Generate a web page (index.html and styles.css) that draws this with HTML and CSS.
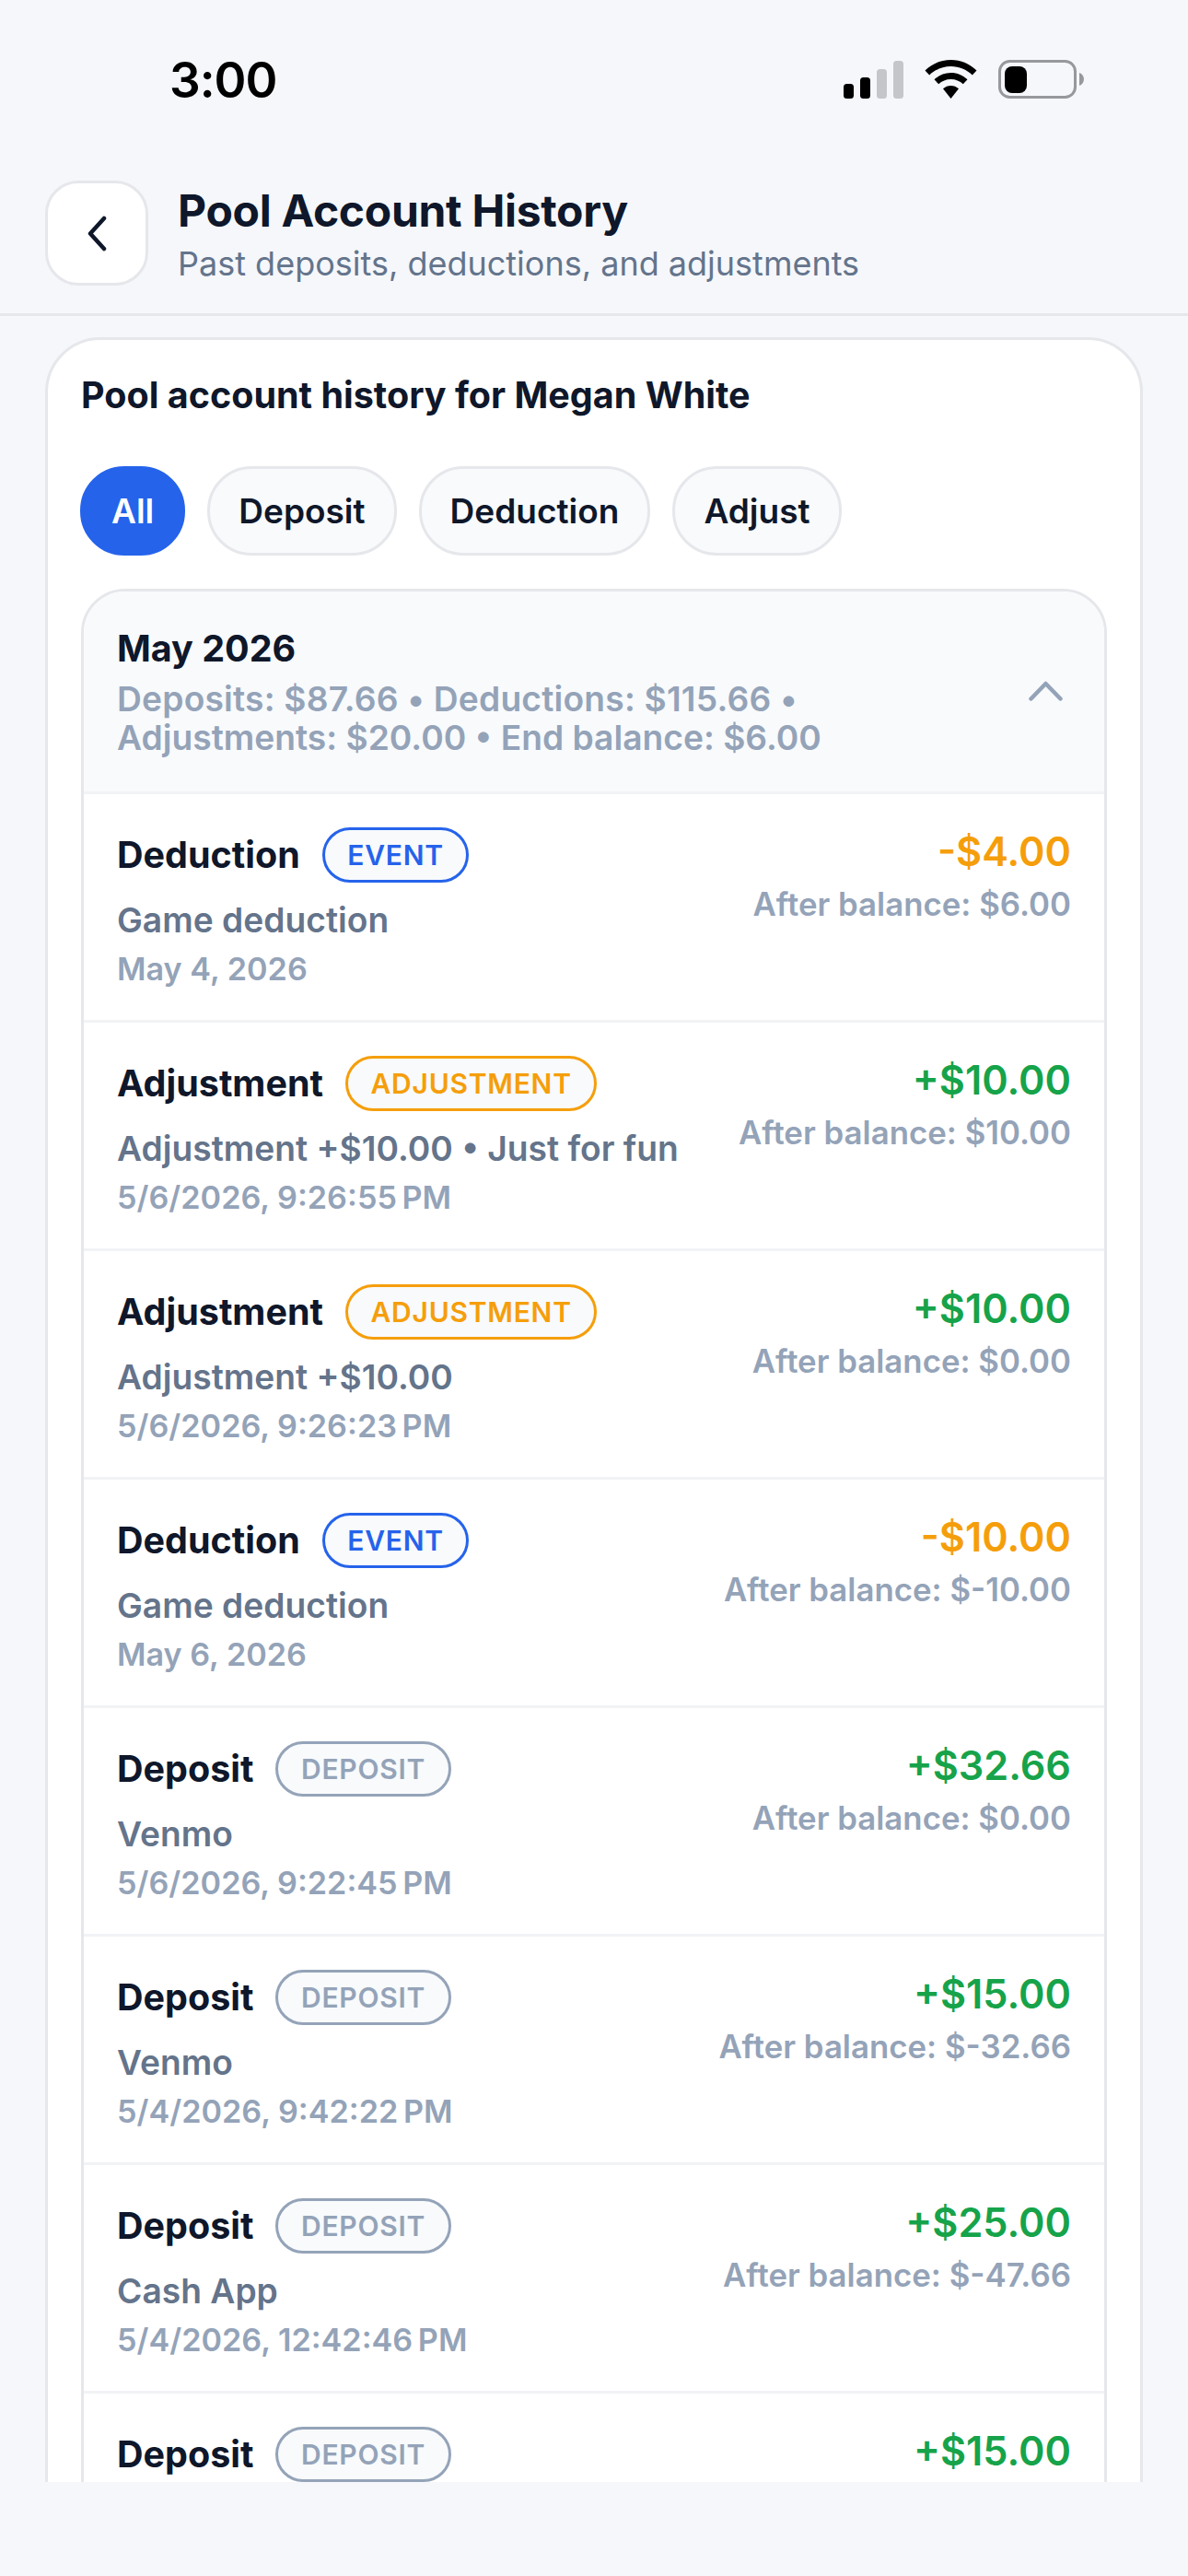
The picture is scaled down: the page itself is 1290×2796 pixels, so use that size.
FILE: index.html
```html
<!DOCTYPE html>
<html lang="en">
<head>
<meta charset="utf-8">
<title>Pool Account History</title>
<link rel="stylesheet" href="styles.css">
</head>
<body>
<div class="status-bar">
  <span class="clock">3:00</span>
  <div class="status-icons">
    <svg class="ico-signal" width="65" height="41" viewBox="0 0 65 41">
      <rect x="0" y="25" width="11" height="16" rx="3.5" fill="#000"/>
      <rect x="18" y="18" width="11" height="23" rx="3.5" fill="#000"/>
      <rect x="36" y="9" width="11" height="32" rx="3.5" fill="#c4c6ca"/>
      <rect x="54" y="0" width="11" height="41" rx="3.5" fill="#c4c6ca"/>
    </svg>
    <svg class="ico-wifi" width="57" height="42" viewBox="0 0 57 42">
      <path d="M28.500 0C17.500 0 8 4.300 0.500 11.500L5.200 16.500C11.500 10.500 19.500 7 28.500 7C37.500 7 45.500 10.500 51.800 16.500L56.500 11.500C49 4.300 39.500 0 28.500 0Z" fill="#000"/>
      <path d="M28.500 14C21.500 14 15.500 16.700 10.500 21.300L15.200 26.300C18.700 23 23.300 21 28.500 21C33.700 21 38.300 23 41.800 26.300L46.500 21.300C41.500 16.700 35.500 14 28.500 14Z" fill="#000"/>
      <path d="M28.500 28C25.300 28 22.400 29.200 20 31.300L28.500 42L37 31.300C34.600 29.200 31.700 28 28.500 28Z" fill="#000"/>
    </svg>
    <svg class="ico-battery" width="93" height="42" viewBox="0 0 93 42">
      <rect x="1.500" y="1.500" width="82" height="39" rx="11" fill="none" stroke="#97989b" stroke-width="3"/>
      <rect x="7" y="7" width="24" height="29" rx="8" fill="#000"/>
      <path d="M88 14C91 15 93 18 93 21C93 24 91 27 88 28Z" fill="#97989b"/>
    </svg>
  </div>
</div>

<header class="page-head">
  <button class="back-btn" type="button" aria-label="Back">
    <svg width="24" height="39" viewBox="0 0 24 39">
      <path d="M20 3L5 19.500L20 36" fill="none" stroke="#0f172a" stroke-width="4.500" stroke-linecap="round" stroke-linejoin="round"/>
    </svg>
  </button>
  <div class="head-text">
    <h1 class="head-title">Pool Account History</h1>
    <p class="head-sub">Past deposits, deductions, and adjustments</p>
  </div>
</header>

<main class="content">
  <section class="card">
    <h2 class="card-title">Pool account history for Megan White</h2>
    <div class="chips">
      <span class="chip chip-active">All</span>
      <span class="chip">Deposit</span>
      <span class="chip">Deduction</span>
      <span class="chip">Adjust</span>
    </div>
    <div class="month">
      <div class="month-head">
        <div class="month-info">
          <div class="month-name">May 2026</div>
          <div class="month-summary month-summary-first">Deposits: $87.66 • Deductions: $115.66 •</div>
          <div class="month-summary">Adjustments: $20.00 • End balance: $6.00</div>
        </div>
        <svg class="month-chevron" width="37" height="22" viewBox="0 0 37 22">
          <path d="M2.500 19.500L18.500 3L34.500 19.500" fill="none" stroke="#94a3b8" stroke-width="4.500" stroke-linecap="round" stroke-linejoin="round"/>
        </svg>
      </div>

      <article class="row">
        <div class="row-main">
          <div class="row-top"><span class="row-type">Deduction</span><span class="tag tag-event">EVENT</span></div>
          <div class="row-note">Game deduction</div>
          <div class="row-date">May 4, 2026</div>
        </div>
        <div class="row-side">
          <div class="amount amount-out">-$4.00</div>
          <div class="balance">After balance: $6.00</div>
        </div>
      </article>

      <article class="row">
        <div class="row-main">
          <div class="row-top"><span class="row-type">Adjustment</span><span class="tag tag-adjust">ADJUSTMENT</span></div>
          <div class="row-note">Adjustment +$10.00 • Just for fun</div>
          <div class="row-date">5/6/2026, 9:26:55&#8201;PM</div>
        </div>
        <div class="row-side">
          <div class="amount amount-in">+$10.00</div>
          <div class="balance">After balance: $10.00</div>
        </div>
      </article>

      <article class="row">
        <div class="row-main">
          <div class="row-top"><span class="row-type">Adjustment</span><span class="tag tag-adjust">ADJUSTMENT</span></div>
          <div class="row-note">Adjustment +$10.00</div>
          <div class="row-date">5/6/2026, 9:26:23&#8201;PM</div>
        </div>
        <div class="row-side">
          <div class="amount amount-in">+$10.00</div>
          <div class="balance">After balance: $0.00</div>
        </div>
      </article>

      <article class="row">
        <div class="row-main">
          <div class="row-top"><span class="row-type">Deduction</span><span class="tag tag-event">EVENT</span></div>
          <div class="row-note">Game deduction</div>
          <div class="row-date">May 6, 2026</div>
        </div>
        <div class="row-side">
          <div class="amount amount-out">-$10.00</div>
          <div class="balance">After balance: $-10.00</div>
        </div>
      </article>

      <article class="row">
        <div class="row-main">
          <div class="row-top"><span class="row-type">Deposit</span><span class="tag tag-deposit">DEPOSIT</span></div>
          <div class="row-note">Venmo</div>
          <div class="row-date">5/6/2026, 9:22:45&#8201;PM</div>
        </div>
        <div class="row-side">
          <div class="amount amount-in">+$32.66</div>
          <div class="balance">After balance: $0.00</div>
        </div>
      </article>

      <article class="row">
        <div class="row-main">
          <div class="row-top"><span class="row-type">Deposit</span><span class="tag tag-deposit">DEPOSIT</span></div>
          <div class="row-note">Venmo</div>
          <div class="row-date">5/4/2026, 9:42:22&#8201;PM</div>
        </div>
        <div class="row-side">
          <div class="amount amount-in">+$15.00</div>
          <div class="balance">After balance: $-32.66</div>
        </div>
      </article>

      <article class="row">
        <div class="row-main">
          <div class="row-top"><span class="row-type">Deposit</span><span class="tag tag-deposit">DEPOSIT</span></div>
          <div class="row-note">Cash App</div>
          <div class="row-date">5/4/2026, 12:42:46&#8201;PM</div>
        </div>
        <div class="row-side">
          <div class="amount amount-in">+$25.00</div>
          <div class="balance">After balance: $-47.66</div>
        </div>
      </article>

      <article class="row">
        <div class="row-main">
          <div class="row-top"><span class="row-type">Deposit</span><span class="tag tag-deposit">DEPOSIT</span></div>
        </div>
        <div class="row-side">
          <div class="amount amount-in">+$15.00</div>
        </div>
      </article>
    </div>
  </section>
</main>
</body>
</html>
```

FILE: styles.css
```css
* {
  box-sizing: border-box;
}

html,
body {
  margin: 0;
  padding: 0;
}

body {
  width: 1290px;
  height: 2796px;
  overflow: hidden;
  background: #f5f7fb;
  color: #0f172a;
  font-family: Inter, "Liberation Sans", sans-serif;
}

/* Status bar */
.status-bar {
  height: 172px;
  padding: 61px 113px 0 184px;
  display: flex;
  justify-content: space-between;
  align-items: flex-start;
}

.clock {
  font-size: 53px;
  line-height: 52px;
  font-weight: 600;
  color: #000;
  letter-spacing: -1px;
}

.status-icons {
  display: flex;
  align-items: flex-start;
  margin-top: 4px;
}

.ico-signal {
  margin-top: 1px;
}

.ico-wifi {
  margin-left: 23px;
}

.ico-battery {
  margin-left: 23px;
}

/* Page header */
.page-head {
  height: 171px;
  padding: 24px 49px 0;
  display: flex;
  align-items: flex-start;
  gap: 32px;
  border-bottom: 3px solid #e5e7eb;
}

.back-btn {
  width: 112px;
  height: 114px;
  padding: 0;
  border: 3px solid #e5e7eb;
  border-radius: 36px;
  background: #fff;
  display: flex;
  align-items: center;
  justify-content: center;
}

.head-text {
  padding-top: 3px;
}

.head-title {
  margin: 0;
  font-size: 48px;
  line-height: 60px;
  font-weight: 700;
  letter-spacing: -0.3px;
}

.head-sub {
  margin: 3px 0 0;
  font-size: 36px;
  line-height: 48px;
  font-weight: 400;
  color: #64748b;
}

/* Main card */
.content {
  height: 2351px;
  padding: 23px 49px 0;
  overflow: hidden;
}

.card {
  width: 1192px;
  padding: 33px 36px 0;
  background: #fff;
  border: 3px solid #e5e7eb;
  border-radius: 60px;
}

.card-title {
  margin: 0;
  font-size: 39.500px;
  line-height: 54px;
  font-weight: 700;
}

.chips {
  margin: 50px 0 0 -1px;
  display: flex;
  gap: 24px;
}

.chip {
  height: 97px;
  padding: 0 31px;
  display: flex;
  align-items: center;
  border: 3px solid #e5e7eb;
  border-radius: 48px;
  background: #f8fafc;
  font-size: 37px;
  font-weight: 600;
}

.chip-active {
  background: #2563eb;
  border-color: #2563eb;
  color: #fff;
}

/* Month group */
.month {
  margin-top: 36px;
  border: 3px solid #e5e7eb;
  border-radius: 48px;
  overflow: hidden;
}

.month-head {
  height: 220px;
  padding: 35px 45px 0 36px;
  background: #f8fafc;
  border-bottom: 3px solid #f1f3f5;
  display: flex;
  justify-content: space-between;
  align-items: flex-start;
}

.month-info {
  width: 800px;
}

.month-name {
  font-size: 39.500px;
  line-height: 54px;
  font-weight: 700;
}

.month-summary {
  font-size: 37.200px;
  line-height: 42px;
  font-weight: 600;
  color: #94a3b8;
  white-space: nowrap;
}

.month-summary-first {
  margin-top: 7px;
  letter-spacing: 0.200px;
}

.month-chevron {
  margin-top: 62px;
}

/* Transaction rows */
.row {
  height: 248px;
  padding: 36px 36px 0;
  border-bottom: 3px solid #f1f3f5;
  display: flex;
  justify-content: space-between;
  align-items: flex-start;
}

.row-top {
  height: 60px;
  display: flex;
  align-items: center;
  gap: 24px;
}

.row-type {
  font-size: 39.500px;
  font-weight: 700;
}

.tag {
  height: 60px;
  padding: 0 24.500px;
  display: flex;
  align-items: center;
  border: 3px solid;
  border-radius: 30px;
  background: #f8fafc;
  font-size: 30px;
  font-weight: 600;
  letter-spacing: 0.750px;
}

.tag-event {
  color: #2563eb;
  border-color: #2563eb;
}

.tag-adjust {
  color: #f59e0b;
  border-color: #f59e0b;
}

.tag-deposit {
  color: #94a3b8;
  border-color: #94a3b8;
}

.row-note {
  margin-top: 14px;
  font-size: 37.200px;
  line-height: 54px;
  font-weight: 600;
  color: #64748b;
}

.row-date {
  margin-top: 3px;
  font-size: 34.200px;
  line-height: 45px;
  font-weight: 600;
  color: #94a3b8;
}

.row-side {
  padding-top: 2px;
  text-align: right;
}

.amount {
  font-size: 43.200px;
  line-height: 48px;
  font-weight: 600;
}

.amount-out {
  color: #f59e0b;
}

.amount-in {
  color: #16a34a;
}

.balance {
  margin-top: 11px;
  font-size: 34.800px;
  line-height: 45px;
  font-weight: 600;
  color: #94a3b8;
}
```
